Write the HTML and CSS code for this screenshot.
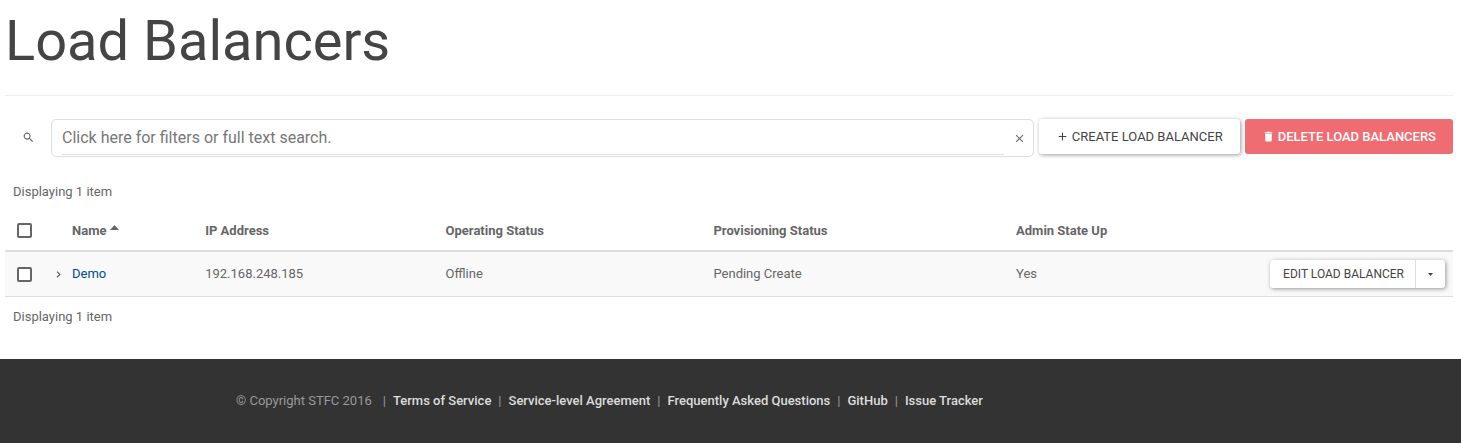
FILE: index.html
```html
<!DOCTYPE html>
<html lang="en">
<head>
<meta charset="utf-8">
<title>Load Balancers</title>
<link rel="stylesheet" href="styles.css">
</head>
<body>
<main class="content">
  <header class="page-header"><h1 class="page-title">Load Balancers</h1></header>

  <div class="toolbar">
    <label class="search-label" for="search" aria-label="Search">
      <svg class="icon" width="13" height="13" viewBox="0 0 24 24"><path d="M15.500 14h-.8l-.3-.3A6.500 6.500 0 1 0 13.700 14.400l.3.3v.8l5 5 1.500-1.500zm-6 0a4.500 4.500 0 1 1 0-9 4.500 4.500 0 0 1 0 9z"/></svg>
    </label>
    <div class="search-box">
      <input class="search-input" id="search" type="text" placeholder="Click here for filters or full text search.">
      <button class="clear" type="button" aria-label="Clear search">
        <svg class="icon" width="13" height="13" viewBox="0 0 24 24"><path d="M19 6.400 17.600 5 12 10.600 6.400 5 5 6.400 10.600 12 5 17.600 6.400 19 12 13.400 17.600 19 19 17.600 13.400 12z"/></svg>
      </button>
    </div>
    <button class="btn btn-default" type="button">
      <svg class="icon" width="13" height="13" viewBox="0 0 24 24"><path d="M19 13h-6v6h-2v-6H5v-2h6V5h2v6h6z"/></svg>
      <span>CREATE LOAD BALANCER</span>
    </button>
    <button class="btn btn-danger" type="button">
      <svg class="icon" width="13" height="13" viewBox="0 0 24 24"><path d="M6 19c0 1.100.9 2 2 2h8a2 2 0 0 0 2-2V7H6zM19 4h-3.500l-1-1h-5l-1 1H5v2h14z"/></svg>
      <span>DELETE LOAD BALANCERS</span>
    </button>
  </div>

  <p class="count">Displaying 1 item</p>
  <table class="table">
    <thead>
      <tr>
        <th class="col-check"><input class="check" type="checkbox" aria-label="Select all"></th>
        <th class="col-expand"></th>
        <th class="col-name">Name <svg class="sort" width="9" height="5" viewBox="0 0 9 5"><path d="M0 5 4.500 0 9 5z"/></svg></th>
        <th class="col-ip">IP Address</th>
        <th class="col-operating">Operating Status</th>
        <th class="col-provisioning">Provisioning Status</th>
        <th>Admin State Up</th>
        <th class="col-actions"></th>
      </tr>
    </thead>
    <tbody>
      <tr>
        <td class="col-check"><input class="check" type="checkbox" aria-label="Select Demo"></td>
        <td class="col-expand"><button class="expand" type="button" aria-label="Expand Demo"><svg class="icon" width="13" height="13" viewBox="0 0 24 24"><path d="M8.600 16.300 13.200 12 8.600 7.400 10 6l6 6-6 6z"/></svg></button></td>
        <td><a class="link" href="#">Demo</a></td>
        <td>192.168.248.185</td>
        <td>Offline</td>
        <td>Pending Create</td>
        <td>Yes</td>
        <td class="col-actions">
          <div class="btn-group">
            <button class="btn-small" type="button">EDIT LOAD BALANCER</button>
            <button class="btn-small btn-toggle" type="button" aria-label="More actions"><svg class="icon" width="5" height="3" viewBox="0 0 5 3"><path d="M0 0h5L2.500 3z"/></svg></button>
          </div>
        </td>
      </tr>
    </tbody>
  </table>
  <p class="count count-bottom">Displaying 1 item</p>
</main>

<footer class="footer">
  <span class="copyright">© Copyright STFC 2016</span>
  <ul class="footer-links">
    <li class="footer-item"><a class="footer-link" href="#">Terms of Service</a></li>
    <li class="footer-item"><a class="footer-link" href="#">Service-level Agreement</a></li>
    <li class="footer-item"><a class="footer-link" href="#">Frequently Asked Questions</a></li>
    <li class="footer-item"><a class="footer-link" href="#">GitHub</a></li>
    <li class="footer-item"><a class="footer-link" href="#">Issue Tracker</a></li>
  </ul>
</footer>
</body>
</html>
```

FILE: styles.css
```css
* { box-sizing: border-box; }

body {
  margin: 0;
  min-height: 100vh;
  display: flex;
  flex-direction: column;
  background: #fff;
  color: #666;
  font: 13px/22px Roboto, "Liberation Sans", sans-serif;
}

button, input { font: inherit; }
button { cursor: pointer; }
.icon, .sort { fill: currentColor; flex: none; }

.content { padding: 10px 8px 31px 5px; }

.page-header {
  padding-bottom: 23px;
  border-bottom: 1px solid #eee;
}
.page-title {
  margin: 0;
  color: #444;
  font-size: 56px;
  font-weight: 400;
  line-height: 62px;
}

.toolbar {
  display: flex;
  align-items: flex-start;
  gap: 5px;
  margin-top: 23px;
}
.search-label {
  width: 41px;
  height: 36px;
  display: flex;
  align-items: center;
  justify-content: center;
  padding-left: 5px;
}
.search-box {
  flex: 1;
  display: flex;
  align-items: center;
  height: 38px;
  padding-left: 10px;
  border: 1px solid #ddd;
  border-radius: 5px;
}
.search-input {
  flex: 1;
  min-width: 0;
  height: 34px;
  padding: 0;
  border: 0;
  border-bottom: 1px solid #ddd;
  background: none;
  color: #666;
  font-size: 16px;
  outline: 0;
}
.search-input::placeholder { color: #777; opacity: 1; }
.clear {
  width: 29px;
  padding: 0 0 0 2px;
  display: flex;
  justify-content: center;
  border: 0;
  background: none;
  color: #666;
}

.btn {
  height: 35px;
  display: flex;
  align-items: center;
  gap: 3px;
  padding: 0 17px;
  border: 0;
  border-radius: 3px;
  white-space: nowrap;
}
.btn-default {
  background: #fff;
  color: #444;
  box-shadow: 1px 1px 4px rgba(0, 0, 0, .4);
}
.btn-danger {
  background: #ef6c72;
  color: #fff;
  font-weight: 500;
}

.count { margin: 24px 8px 8px; }
.count-bottom { margin: 9px 8px 0; }

.table {
  width: 100%;
  border-collapse: separate;
  border-spacing: 0;
  table-layout: fixed;
}
.table th, .table td {
  padding: 8px;
  text-align: left;
  white-space: nowrap;
}
.table th {
  height: 41px;
  border-bottom: 2px solid #ddd;
  font-weight: 700;
}
.table td {
  height: 45px;
  border-bottom: 1px solid #ddd;
  background: #f9f9f9;
}
.table .col-check { width: 43px; padding: 0 12px; }
.table .col-expand { width: 16px; padding: 0; }
.table .col-actions { padding: 0 8px; }
.col-name { width: 9.2%; }
.col-ip { width: 16.6%; }
.col-operating { width: 18.5%; }
.col-provisioning { width: 20.9%; }
.sort { vertical-align: 5px; }

.check {
  appearance: none;
  display: block;
  width: 15px;
  height: 15px;
  margin: 0;
  border: 2px solid #666;
  border-radius: 2px;
  background: #fff;
}
.expand {
  display: flex;
  padding: 0 0 0 4px;
  border: 0;
  background: none;
  color: #555;
}
.link { color: #004b8d; text-decoration: none; }

.btn-group {
  display: flex;
  width: max-content;
  margin-left: auto;
  border-radius: 3px;
  background: #fff;
  box-shadow: 1px 1px 4px rgba(0, 0, 0, .4);
}
.btn-small {
  height: 28px;
  padding: 0 11px 0 13px;
  border: 0;
  background: none;
  color: #444;
  font-size: 12px;
}
.btn-toggle {
  display: flex;
  align-items: center;
  padding: 0 12px;
  border-left: 1px solid #ddd;
}

.footer {
  flex: 1;
  display: flex;
  gap: 11px;
  padding: 31px 236px;
  background: #333;
  color: #999;
}
.footer-links {
  display: flex;
  margin: 0;
  padding: 0;
  list-style: none;
}
.footer-item::before { content: "|"; margin-right: 7px; }
.footer-item + .footer-item::before { margin-left: 7px; }
.footer-link { color: #ddd; font-weight: 500; text-decoration: none; }
```
